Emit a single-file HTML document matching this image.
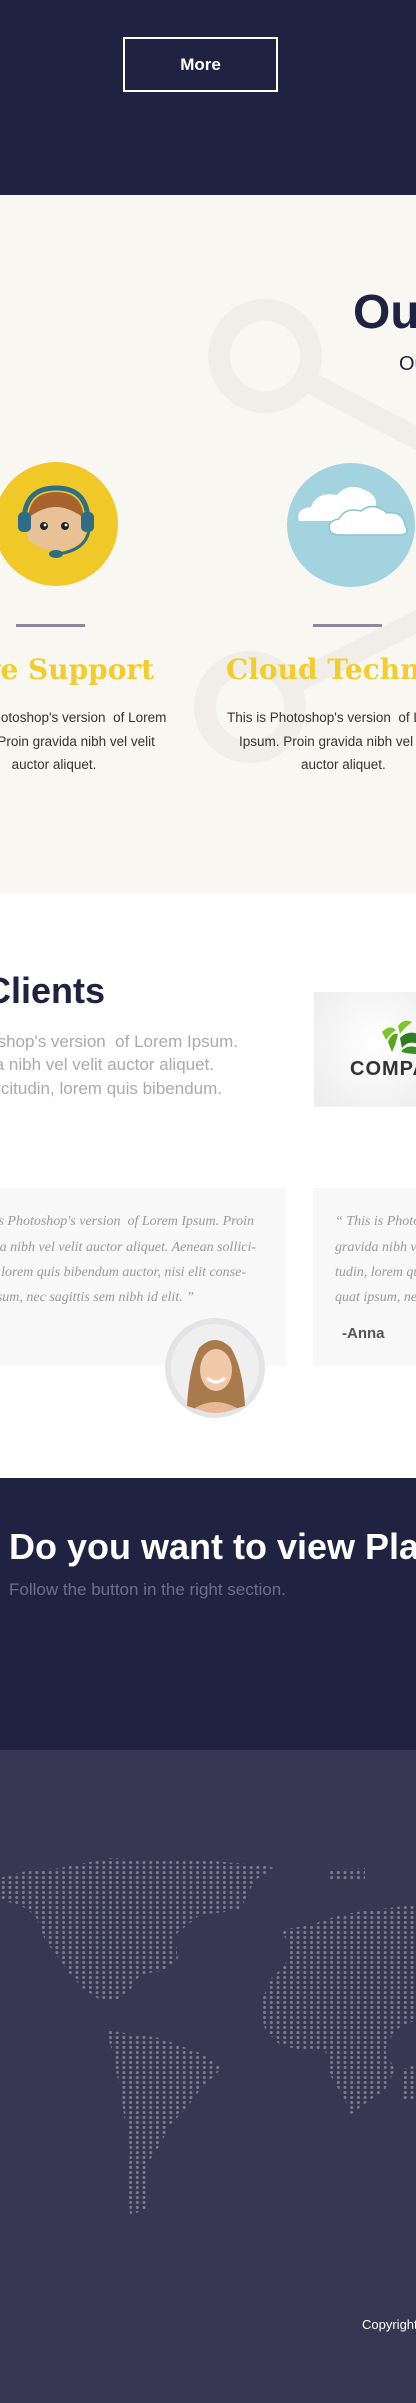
<!DOCTYPE html>
<html><head><meta charset="utf-8"><style>
*{margin:0;padding:0;box-sizing:border-box}
html,body{overflow:hidden;width:416px;height:2403px}
body{font-family:"Liberation Sans",sans-serif;background:#fff}
#w{position:relative;width:416px;height:2403px;overflow:hidden}
.a{position:absolute;white-space:nowrap}
.r{text-align:right}
.c{text-align:center}
.t{font-family:'Liberation Serif',serif;font-style:italic;font-size:14px;color:#999}
</style></head><body><div id="w">
<div class="a" style="left:0;top:0;width:416px;height:195px;background:#202242"></div>
<div class="a c" style="left:123px;top:37px;width:155px;height:55px;border:2px solid #fff;color:#fff;font-weight:bold;font-size:17px;line-height:51px">More</div>

<div class="a" style="left:0;top:195px;width:416px;height:698px;background:#f9f7f1;overflow:hidden">
<svg width="416" height="698" style="position:absolute;left:0;top:0">
<g fill="none" stroke="#f1eee9" stroke-width="22">
<circle cx="265" cy="161" r="46"/>
<line x1="305" y1="185" x2="430" y2="250"/>
<circle cx="250" cy="512" r="45"/>
<line x1="290" y1="490" x2="430" y2="420"/>
</g>
</svg>
<div class="a" style="left:353px;top:90px;font-size:48px;font-weight:bold;color:#202242">Our Services</div>
<div class="a" style="left:399px;top:158px;font-size:20px;color:#202242">Our</div>
<svg class="a" style="left:-6px;top:267px" width="124" height="124" viewBox="0 0 124 124">
<circle cx="62" cy="62" r="62" fill="#f0c929"/>
<path d="M34 52 Q62 30 90 52 L90 78 Q62 100 34 78Z" fill="#e9c196"/>
<path d="M34 56 Q36 30 62 30 Q88 30 90 56 Q75 45 62 45 Q48 45 34 56Z" fill="#a8642f"/>
<path d="M30 60 Q30 26 62 26 Q94 26 94 60" fill="none" stroke="#2f6d87" stroke-width="5"/>
<rect x="24" y="50" width="13" height="20" rx="5" fill="#2f6d87"/>
<rect x="87" y="50" width="13" height="20" rx="5" fill="#2f6d87"/>
<path d="M95 68 Q92 88 64 92" fill="none" stroke="#2f6d87" stroke-width="3"/>
<ellipse cx="62" cy="92" rx="7" ry="4" fill="#2f6d87"/>
<circle cx="50" cy="64" r="4" fill="#222"/><circle cx="71" cy="64" r="4" fill="#222"/>
<circle cx="51" cy="63" r="1.4" fill="#fff"/><circle cx="72" cy="63" r="1.4" fill="#fff"/>
</svg>
<svg class="a" style="left:287px;top:268px" width="128" height="124" viewBox="0 0 128 124">
<ellipse cx="64" cy="62" rx="64" ry="62" fill="#a3d3de"/>
<path d="M12 58 Q8 46 24 44 Q30 28 50 32 Q62 18 80 28 Q92 34 88 46 L88 58Z" fill="#fff"/>
<path d="M44 70 Q38 58 52 56 Q58 44 74 48 Q86 38 100 50 Q116 48 118 62 Q124 72 112 72 L50 72Z" fill="#fff" stroke="#8cc4d3" stroke-width="1.5"/>
</svg>
<div class="a" style="left:16px;top:429px;width:69px;height:3px;background:#8a8a99"></div>
<div class="a" style="left:313px;top:429px;width:69px;height:3px;background:#8a8a99"></div>
<div class="a c" style="left:-146px;top:458px;width:400px;font-family:'DejaVu Serif',serif;font-weight:bold;font-size:28px;color:#f2cd2c">Live Support</div>
<div class="a" style="left:226px;top:458px;font-family:'DejaVu Serif',serif;font-weight:bold;font-size:28px;color:#f2cd2c">Cloud Technology</div>
<div class="a c" style="left:-146px;top:511px;width:400px;font-size:13.5px;line-height:23.5px;color:#333">This is Photoshop's version &nbsp;of Lorem<br>Ipsum. Proin gravida nibh vel velit<br>auctor aliquet.</div>
<div class="a" style="left:227px;top:511px;width:189px;overflow:hidden;font-size:13.5px;line-height:23.5px;color:#333">This is Photoshop's version &nbsp;of Lorem<br><span style="padding-left:12px">Ipsum. Proin gravida nibh vel velit</span><br><span style="padding-left:74px">auctor aliquet.</span></div>
</div>

<div class="a r" style="right:311px;top:970px;font-size:36px;font-weight:bold;color:#202242">Our Clients</div>
<div class="a r" style="right:178px;top:1032px;font-size:17px;color:#aaa">This is Photoshop's version &nbsp;of Lorem Ipsum.</div>
<div class="a r" style="right:202px;top:1055px;font-size:17px;color:#aaa">Proin gravida nibh vel velit auctor aliquet.</div>
<div class="a r" style="right:194px;top:1079px;font-size:17px;color:#aaa">Aenean sollicitudin, lorem quis bibendum.</div>
<div class="a" style="left:314px;top:992px;width:102px;height:115px;background:radial-gradient(circle at 60% 45%,#fff,#ececec);overflow:hidden">
<svg class="a" style="left:64px;top:26px" width="40" height="38" viewBox="0 0 40 38">
<path d="M4 14 Q12 6 18 12 Q12 16 8 22Z" fill="#7cc52a"/>
<path d="M10 24 Q14 14 20 16 Q18 26 14 34Z" fill="#5aa51e"/>
<path d="M20 8 Q26 0 34 4 Q26 10 22 16Z" fill="#7cc52a"/>
<path d="M22 20 Q30 12 40 16 L40 26 Q30 22 24 30Z" fill="#2e7d1f"/>
<path d="M24 32 Q32 26 40 30 L40 36 Q30 36 24 34Z" fill="#3e8f22"/>
</svg>
<div class="a" style="left:36px;top:66px;font-size:20px;font-weight:bold;color:#333;letter-spacing:1px">COMPANY</div>
</div>

<div class="a" style="left:0;top:1188px;width:286px;height:178px;background:#f8f8f8"></div>
<div class="a" style="left:313px;top:1188px;width:103px;height:178px;background:#f8f8f8"></div>
<div class="t">
<div class="a r" style="right:162px;top:1214px">“ This is Photoshop's version &nbsp;of Lorem Ipsum. Proin</div>
<div class="a r" style="right:160px;top:1240px">gravida nibh vel velit auctor aliquet. Aenean sollici-</div>
<div class="a r" style="right:170px;top:1265px">tudin, lorem quis bibendum auctor, nisi elit conse-</div>
<div class="a r" style="right:222px;top:1290px">quat ipsum, nec sagittis sem nibh id elit. ”</div>
<div class="a" style="left:335px;top:1214px">“ This is Photoshop's version</div>
<div class="a" style="left:335px;top:1240px">gravida nibh vel velit auctor</div>
<div class="a" style="left:335px;top:1265px">tudin, lorem quis bibendum</div>
<div class="a" style="left:335px;top:1290px">quat ipsum, nec sagittis</div>
</div>
<div class="a" style="left:342px;top:1325px;font-size:15px;font-weight:bold;color:#555">-Anna</div>
<svg class="a" style="left:165px;top:1318px" width="100" height="100" viewBox="0 0 100 100">
<circle cx="50" cy="50" r="50" fill="#e4e4e6"/>
<circle cx="50" cy="50" r="44" fill="#efefef"/>
<path d="M22 88 Q24 50 34 30 Q50 14 66 30 Q78 50 80 88 Q50 98 22 88Z" fill="#a87a4c"/>
<ellipse cx="51" cy="52" rx="16" ry="21" fill="#f1c9a8"/>
<path d="M42 60 Q51 68 60 60" stroke="#fff" stroke-width="3" fill="none"/>
<path d="M30 90 Q50 78 72 90 Q50 100 30 90Z" fill="#e8b894"/>
</svg>

<div class="a" style="left:0;top:1478px;width:416px;height:272px;background:#202242"></div>
<div class="a" style="left:9px;top:1526px;font-size:36px;font-weight:bold;color:#fff">Do you want to view Plans?</div>
<div class="a" style="left:9px;top:1580px;font-size:17px;color:#6c6e88">Follow the button in the right section.</div>

<div class="a" style="left:0;top:1750px;width:416px;height:653px;background:#373753;overflow:hidden">
<svg width="416" height="653">
<defs><pattern id="p" width="6.7" height="5" patternUnits="userSpaceOnUse"><circle cx="3.3" cy="2.5" r="1.5" fill="#7c7d92"/></pattern></defs>
<g fill="url(#p)">
<path d="M60 118 L110 108 L160 110 L200 110 L260 115 L276 118 L255 130 L240 160 L200 165 L175 185 L178 210 L165 220 L140 225 L130 240 L118 250 L100 250 L85 240 L70 225 L60 210 L45 190 L35 165 L20 155 L0 150 L0 128 L30 120Z"/>
<path d="M330 120 L365 118 L365 130 L330 130Z"/>
<path d="M105 280 L160 288 L205 305 L222 318 L200 340 L185 360 L170 375 L160 395 L150 410 L145 425 L150 450 L145 460 L130 465 L128 430 L130 400 L125 370 L118 330 L112 300Z"/>
<path d="M280 180 L310 175 L340 165 L370 160 L416 155 L416 270 L395 280 L385 300 L395 320 L385 340 L370 350 L350 365 L345 350 L330 325 L325 300 L300 300 L280 295 L265 280 L260 255 L270 230 L285 215 L290 195Z"/>
<path d="M400 320 L416 315 L416 350 L402 350Z"/>
</g>
</svg>
<div class="a" style="left:362px;top:567px;font-size:13px;color:#fff">Copyright</div>
</div>
</div></body></html>
